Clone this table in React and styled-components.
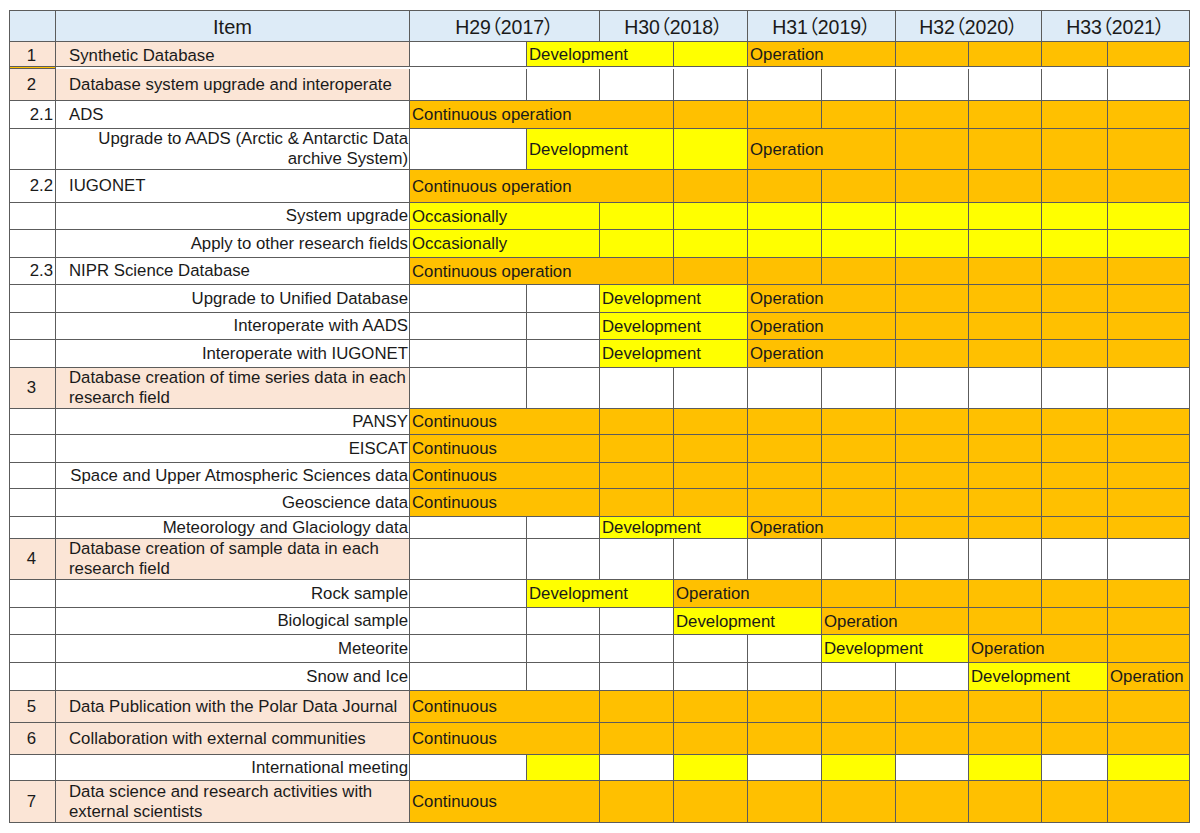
import React from "react";
import styled, { createGlobalStyle } from "styled-components";

// column widths: number, item, then two half-year columns per fiscal year
const COLS = "46px 354px 117px 73px 74px 74px 74px 74px 73px 73px 66px 82px";
const LINE = "#5c5c5c";

const fills = {
  w: "#ffffff",
  y: "#ffff00",
  o: "#ffc000",
};

const GlobalStyle = createGlobalStyle`
  body {
    margin: 0;
    background: #ffffff;
    font-family: "Liberation Sans", Arial, sans-serif;
    color: #1a1a1a;
  }
`;

const Table = styled.div`
  margin: 10px 0 0 9px;
  width: 1181px;
  box-sizing: border-box;
  border-top: 1px solid ${LINE};
  border-left: 1px solid ${LINE};
`;

const Row = styled.div`
  display: grid;
  grid-template-columns: ${COLS};
  height: ${(p) => p.$h}px;
`;

const Cell = styled.div`
  box-sizing: border-box;
  border-right: 1px solid ${LINE};
  border-bottom: 1px solid ${LINE};
  display: flex;
  align-items: center;
  font-size: 16.8px;
  line-height: 20px;
  white-space: nowrap;
  min-width: 0;
`;

const HeadCell = styled(Cell)`
  background: #ddebf7;
  justify-content: center;
  font-size: ${(p) => (p.$year ? 19.5 : 20)}px;
  font-family: "Liberation Sans", "Noto Sans CJK JP", sans-serif;
  font-feature-settings: "palt";
  grid-column: span ${(p) => (p.$year ? 2 : 1)};
  padding-top: 1px;
`;

const NumCell = styled(Cell)`
  background: ${(p) => (p.$main ? "#fbe5d6" : "#ffffff")};
  justify-content: ${(p) => (p.$main ? "center" : "flex-end")};
  padding: ${(p) => (p.$low ? "4px 2px 0 0" : "0 2px 0 0")};
`;

const LabelCell = styled(Cell)`
  background: ${(p) => (p.$main ? "#fbe5d6" : "#ffffff")};
  justify-content: ${(p) => (p.$right ? "flex-end" : "flex-start")};
  text-align: ${(p) => (p.$right ? "right" : "left")};
  padding: ${(p) => (p.$right ? "0 1px 0 0" : "0 0 0 13px")};
  padding-top: ${(p) => (p.$low ? 4 : 0)}px;
  white-space: normal;
`;

const Bar = styled(Cell)`
  grid-column: span ${(p) => p.$span};
  background: ${(p) => fills[p.$fill]};
  padding: 1px 0 0 2px;
  overflow: visible;
`;

const cells = (fill, n) => Array.from({ length: n }, () => [fill, 1]);

const continuousOp = [["o", 3, "Continuous operation"], ...cells("o", 7)];
const continuous = [["o", 2, "Continuous"], ...cells("o", 8)];
const occasionally = [["y", 2, "Occasionally"], ...cells("y", 8)];
const devFrom29 = [["w", 1], ["y", 2, "Development"], ["y", 1], ["o", 2, "Operation"], ...cells("o", 5)];
const devFrom30 = [...cells("w", 2), ["y", 2, "Development"], ["o", 2, "Operation"], ...cells("o", 4)];
const blank = cells("w", 10);

const years = ["H29（2017）", "H30（2018）", "H31（2019）", "H32（2020）", "H33（2021）"];

const rows = [
  { h: 27, num: "1", label: "Synthetic Database", main: true, low: true, bars: devFrom29 },
  { h: 32, num: "2", label: "Database system upgrade and interoperate", main: true, bars: blank },
  { h: 28, num: "2.1", label: "ADS", bars: continuousOp },
  {
    h: 41,
    label: ["Upgrade to AADS (Arctic & Antarctic Data", "archive System)"],
    right: true,
    bars: devFrom29,
  },
  { h: 33, num: "2.2", label: "IUGONET", bars: continuousOp },
  { h: 27, label: "System upgrade", right: true, bars: occasionally },
  { h: 28, label: "Apply to other research fields", right: true, bars: occasionally },
  { h: 27, num: "2.3", label: "NIPR Science Database", bars: continuousOp },
  { h: 28, label: "Upgrade to Unified Database", right: true, bars: devFrom30 },
  { h: 27, label: "Interoperate with AADS", right: true, bars: devFrom30 },
  { h: 28, label: "Interoperate with IUGONET", right: true, bars: devFrom30 },
  {
    h: 41,
    num: "3",
    label: ["Database creation of time series data in each", "research field"],
    main: true,
    bars: blank,
  },
  { h: 26, label: "PANSY", right: true, bars: continuous },
  { h: 28, label: "EISCAT", right: true, bars: continuous },
  { h: 26, label: "Space and Upper Atmospheric Sciences data", right: true, bars: continuous },
  { h: 28, label: "Geoscience data", right: true, bars: continuous },
  { h: 22, label: "Meteorology and Glaciology data", right: true, bars: devFrom30 },
  {
    h: 41,
    num: "4",
    label: ["Database creation of sample data in each", "research field"],
    main: true,
    bars: blank,
  },
  {
    h: 28,
    label: "Rock sample",
    right: true,
    bars: [["w", 1], ["y", 2, "Development"], ["o", 2, "Operation"], ...cells("o", 5)],
  },
  {
    h: 27,
    label: "Biological sample",
    right: true,
    bars: [...cells("w", 3), ["y", 2, "Development"], ["o", 2, "Operation"], ...cells("o", 3)],
  },
  {
    h: 28,
    label: "Meteorite",
    right: true,
    bars: [...cells("w", 5), ["y", 2, "Development"], ["o", 2, "Operation"], ["o", 1]],
  },
  {
    h: 28,
    label: "Snow and Ice",
    right: true,
    bars: [...cells("w", 7), ["y", 2, "Development"], ["o", 1, "Operation"]],
  },
  { h: 32, num: "5", label: "Data Publication with the Polar Data Journal", main: true, bars: continuous },
  { h: 32, num: "6", label: "Collaboration with external communities", main: true, bars: continuous },
  {
    h: 26,
    label: "International meeting",
    right: true,
    bars: Array.from({ length: 10 }, (_, i) => [i % 2 ? "y" : "w", 1]),
  },
  {
    h: 42,
    num: "7",
    label: ["Data science and research activities with", "external scientists"],
    main: true,
    bars: continuous,
  },
];

const Label = ({ text }) =>
  Array.isArray(text) ? (
    <span>
      {text[0]}
      <br />
      {text[1]}
    </span>
  ) : (
    <span>{text}</span>
  );

const App = () => {
  return (
    <>
      <GlobalStyle />
      <Table>
        <Row $h={31}>
          <HeadCell />
          <HeadCell>Item</HeadCell>
          {years.map((y) => (
            <HeadCell key={y} $year>
              {y}
            </HeadCell>
          ))}
        </Row>
        {rows.map((r, i) => (
          <Row key={i} $h={r.h}>
            <NumCell $main={r.main} $low={r.low}>
              {r.num}
            </NumCell>
            <LabelCell $main={r.main} $right={r.right} $low={r.low}>
              <Label text={r.label} />
            </LabelCell>
            {r.bars.map(([fill, span, text], j) => (
              <Bar key={j} $fill={fill} $span={span}>
                {text}
              </Bar>
            ))}
          </Row>
        ))}
      </Table>
    </>
  );
};

export default App;
